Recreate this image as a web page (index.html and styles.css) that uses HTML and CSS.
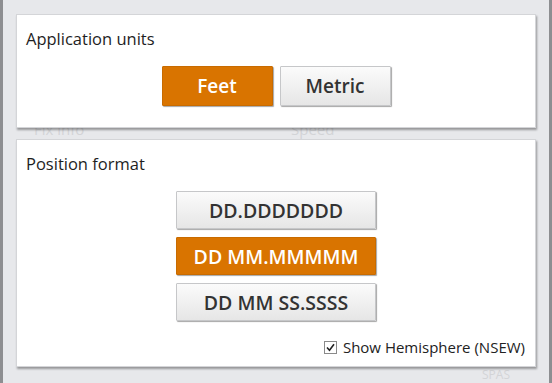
FILE: index.html
```html
<!DOCTYPE html>
<html lang="en">
<head>
    <meta charset="UTF-8">
    <title>Settings</title>
    <link rel="stylesheet" href="styles.css">
</head>
<body>
    <div class="screen">
        <!-- labels of the page underneath -->
        <div class="under">
            <span class="under-label fix">Fix info</span>
            <span class="under-label speed">Speed</span>
            <span class="under-label spas">SPAS</span>
        </div>

        <!-- units -->
        <div class="card card-units">
            <div class="card-title">Application units</div>
            <div class="btn-row">
                <button class="opt-btn opt-small selected">Feet</button>
                <button class="opt-btn opt-small">Metric</button>
            </div>
        </div>

        <!-- position format -->
        <div class="card card-format">
            <div class="card-title">Position format</div>
            <div class="btn-col">
                <button class="opt-btn opt-wide">DD.DDDDDDD</button>
                <button class="opt-btn opt-wide selected">DD MM.MMMMM</button>
                <button class="opt-btn opt-wide">DD MM SS.SSSS</button>
            </div>
            <label class="check-row">
                <span class="check-box">
                    <svg width="11" height="11" viewBox="0 0 11 11">
                        <path d="M2 5.5 L4.5 8.2 L9 2.3" fill="none" stroke="#222" stroke-width="1.6"/>
                    </svg>
                </span>
                Show Hemisphere (NSEW)
            </label>
        </div>
    </div>
</body>
</html>
```

FILE: styles.css
```css
* {
    margin: 0;
    padding: 0;
    box-sizing: border-box;
}

body {
    width: 552px;
    height: 383px;
    background: #e7e8eb;
    font-family: 'Open Sans', 'Noto Sans', sans-serif;
    color: #222;
    overflow: hidden;
}

.screen {
    position: relative;
    height: 383px;
    display: flex;
    flex-direction: column;
    gap: 11px;
    padding: 14px 13px 0 13px;
    border-left: 3px solid #8d8e91;
    border-right: 3px solid #8d8e91;
}

/* 底层页面的文字 */
.under {
    position: absolute;
    top: 0;
    left: 0;
    right: 0;
    bottom: 0;
    z-index: 0;
}

.under-label {
    position: absolute;
    font-size: 15px;
    color: #d3d4d7;
}

.under-label.fix {
    left: 31px;
    top: 119px;
}

.under-label.speed {
    left: 288px;
    top: 119px;
}

.under-label.spas {
    left: 479px;
    top: 368px;
    font-size: 12px;
    line-height: 14px;
}

/* 卡片 */
.card {
    position: relative;
    z-index: 1;
    background: #fff;
    border: 1px solid #d4d5d8;
    box-shadow: 1px 2px 2px rgba(0,0,0,0.35);
    padding: 12px 9px 0 9px;
}

.card-units {
    height: 114px;
}

.card-format {
    height: 228px;
}

.card-title {
    font-size: 16.5px;
    line-height: 23px;
    color: #1e1e1e;
}

/* 按钮 */
.btn-row {
    display: flex;
    justify-content: center;
    gap: 7px;
    margin-top: 16px;
}

.btn-col {
    display: flex;
    flex-direction: column;
    align-items: center;
    gap: 8px;
    margin-top: 16px;
}

.opt-btn {
    font-family: 'Open Sans', 'Noto Sans', sans-serif;
    font-weight: 600;
    color: #333;
    border: 1px solid #c6c7c9;
    border-radius: 1px;
    background: linear-gradient(#fbfbfb, #e6e6e6);
    box-shadow: 1px 1px 1px rgba(0,0,0,0.35);
    cursor: pointer;
}

.opt-small {
    width: 111px;
    height: 40px;
    font-size: 19px;
}

.opt-wide {
    width: 200px;
    height: 38px;
    font-size: 19.5px;
}

.opt-btn.selected {
    background: #d97400;
    border-color: #c86b00;
    color: #fff;
}

/* 复选框 */
.check-row {
    display: flex;
    align-items: center;
    justify-content: flex-end;
    gap: 6px;
    margin-top: 16px;
    margin-right: 1px;
    font-size: 15px;
    color: #222;
}

.check-box {
    width: 13px;
    height: 13px;
    border: 1px solid #8a8a8a;
    background: #fff;
    display: flex;
    align-items: center;
    justify-content: center;
}
```
